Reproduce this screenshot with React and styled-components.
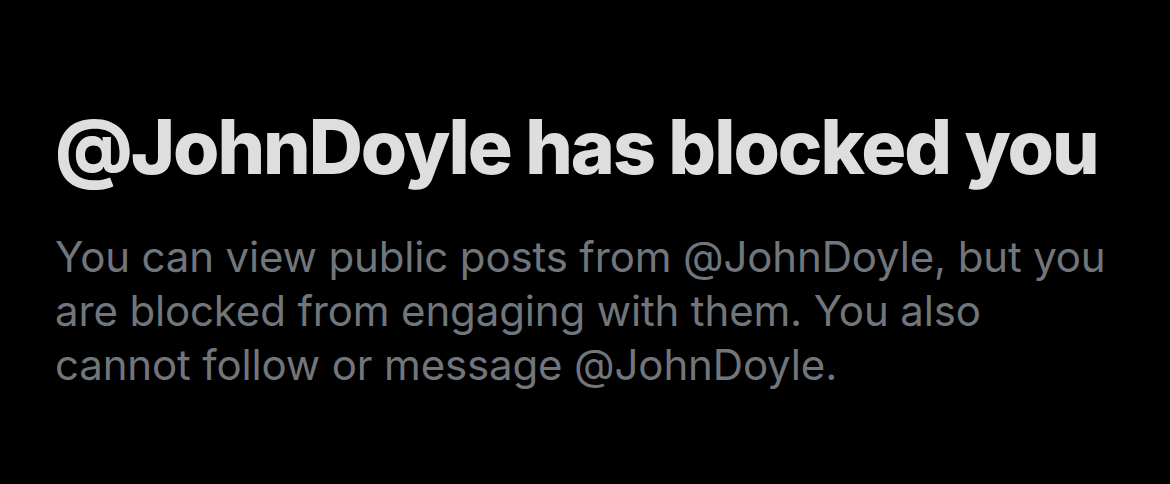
import React from "react";
import styled, { createGlobalStyle } from "styled-components";

const GlobalStyle = createGlobalStyle`
  html, body {
    margin: 0;
    padding: 0;
    background: #000;
  }
`;

const Page = styled.div`
  width: 1170px;
  height: 484px;
  background: #000;
  box-sizing: border-box;
  padding: 103px 0 0 55px;
  display: flex;
  flex-direction: column;
  gap: 39px;
  font-family: Inter, "Liberation Sans", sans-serif;
`;

const Title = styled.h1`
  margin: 0;
  color: #dedede;
  font-size: 75px;
  font-weight: 800;
  line-height: 88px;
  letter-spacing: -2px;
  white-space: nowrap;
`;

const Body = styled.p`
  margin: 0;
  width: 1060px;
  color: #70767b;
  font-size: 42px;
  font-weight: 400;
  line-height: 54px;
  letter-spacing: -0.15px;
`;

const App = () => {
  return (
    <>
      <GlobalStyle />
      <Page>
        <Title>@JohnDoyle has blocked you</Title>
        <Body>
          You can view public posts from @JohnDoyle, but you are blocked from
          engaging with them. You also cannot follow or message @JohnDoyle.
        </Body>
      </Page>
    </>
  );
};

export default App;
